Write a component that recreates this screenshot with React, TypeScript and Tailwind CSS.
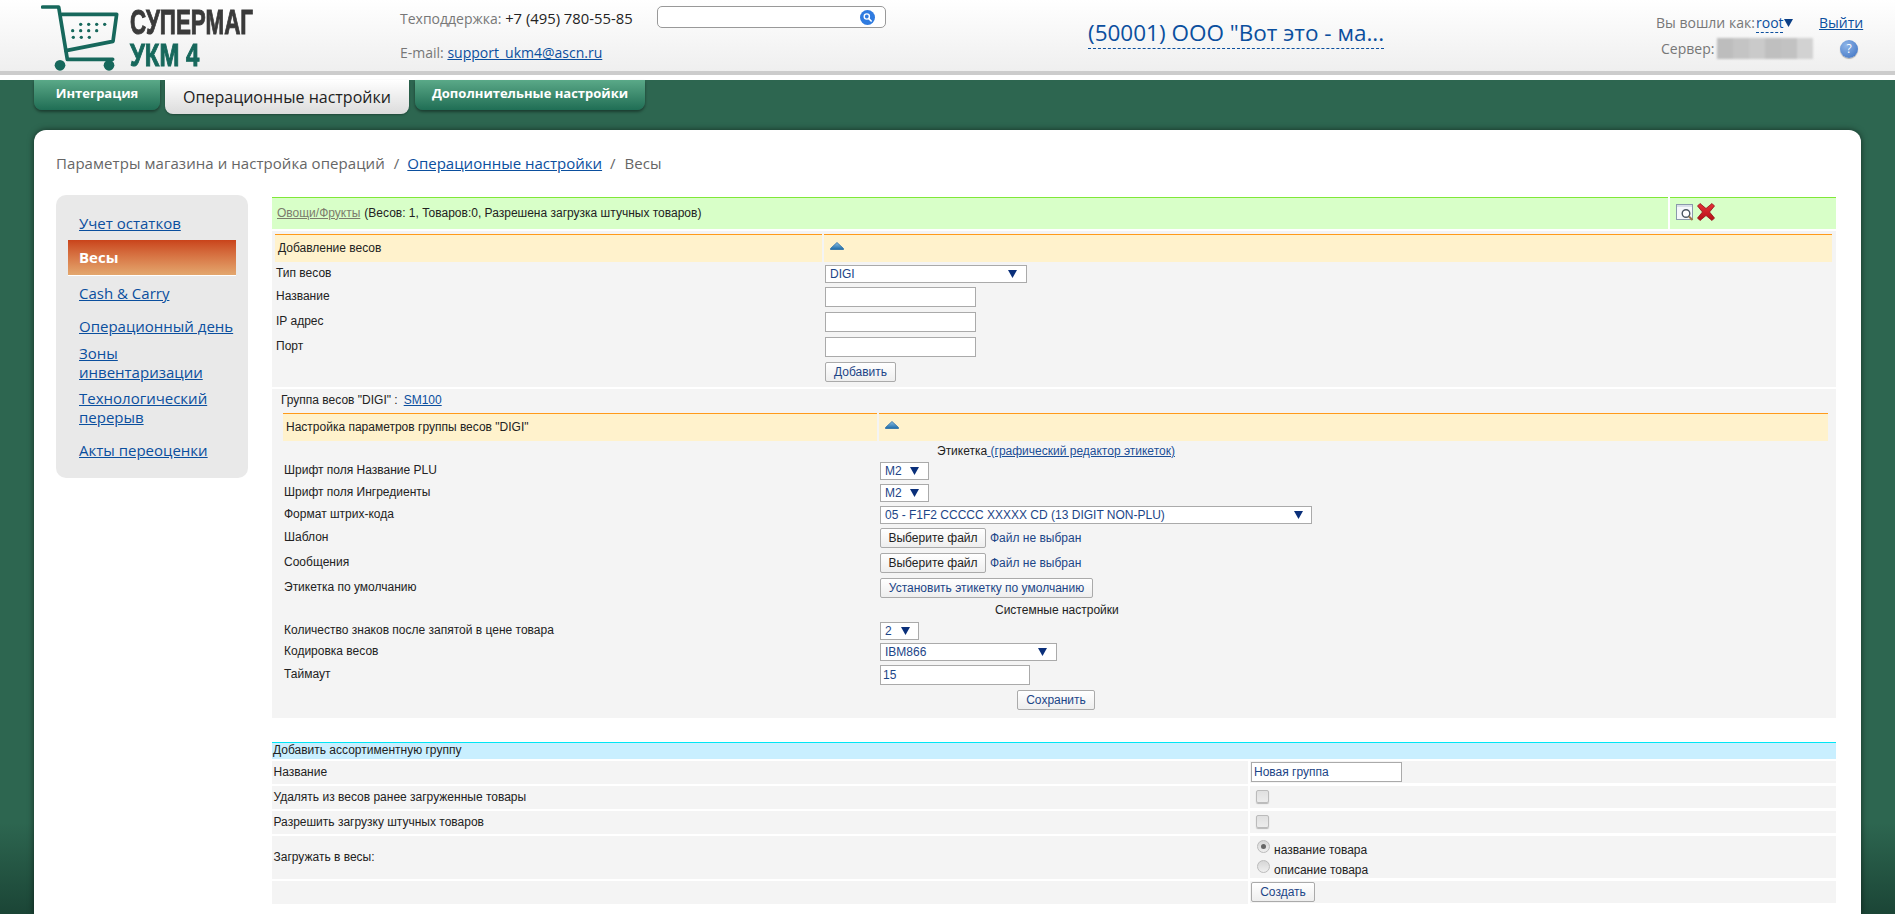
import React from "react";

const Tri = () => (
  <svg width="14" height="8" viewBox="0 0 14 8" className="block">
    <defs>
      <linearGradient id="tg" x1="0" y1="0" x2="0" y2="1">
        <stop offset="0" stopColor="#8cc0e4" />
        <stop offset="1" stopColor="#1b6aa8" />
      </linearGradient>
    </defs>
    <path d="M7 0.5 L13.5 6.5 V7.5 H0.5 V6.5 Z" fill="url(#tg)" stroke="#2a6da6" strokeWidth="0.8" />
  </svg>
);

const Arrow = () => (
  <svg width="9" height="8" viewBox="0 0 9 8" className="block shrink-0">
    <path d="M0 0 H9 L4.5 8 Z" fill="#0a2f7a" />
  </svg>
);

const Sel = ({ text, w, arrowRight }: { text: string; w: string; arrowRight: string }) => (
  <div className={`flex h-[18px] items-center justify-between border border-[#aaa] bg-white pl-[4px] text-[#1c4587] ${w} ${arrowRight}`}>
    <span className="pb-[1px]">{text}</span>
    <Arrow />
  </div>
);

const TextBox = ({ w, value = "" }: { w: string; value?: string }) => (
  <div className={`flex h-[20px] items-center border border-[#aaa] bg-white pb-[1px] pl-[2px] text-[#1c4587] ${w}`}>{value}</div>
);

const Btn = ({ children, w, dark }: { children: React.ReactNode; w: string; dark?: boolean }) => (
  <div
    className={`flex h-[20px] items-center justify-center rounded-[2px] border border-[#aaa] bg-gradient-to-b from-white to-[#eeeeee] pb-[1px] ${dark ? "text-[#222]" : "text-[#1c4587]"} ${w}`}
  >
    {children}
  </div>
);

const Row = ({ h, label, children, left }: { h: string; label?: string; children?: React.ReactNode; left: string }) => (
  <div className={`flex items-center ${h}`}>
    <div className={`shrink-0 pb-[2px] text-[#222] ${left}`}>{label}</div>
    {children}
  </div>
);

const FileRow = ({ h, label }: { h: string; label: string }) => (
  <Row h={h} label={label} left="w-[597px] pl-[1px]">
    <Btn w="w-[106px]" dark>
      Выберите файл
    </Btn>
    <span className="ml-[4px] pb-[1px] text-[#1c4587]">Файл не выбран</span>
  </Row>
);

const Check = () => (
  <span className="block h-[13px] w-[13px] rounded-[2px] border border-[#bbb] bg-gradient-to-b from-[#e0e0e0] to-[#ececec] shadow-[0_1px_1px_rgba(0,0,0,0.25)]" />
);

const Radio = ({ on }: { on?: boolean }) => (
  <span className="flex h-[13px] w-[13px] shrink-0 items-center justify-center rounded-full border border-[#bbb] bg-gradient-to-b from-[#d6d6d6] to-[#efefef]">
    {on && <span className="block h-[5px] w-[5px] rounded-full bg-[#666]" />}
  </span>
);

const GroupRow = ({ label, h, children }: { label: string; h: string; children?: React.ReactNode }) => (
  <div className={`flex gap-[2px] ${h}`}>
    <div className="flex w-[976px] items-center bg-[#f4f4f4] pb-[2px] pl-[1.5px] text-[#222]">{label}</div>
    <div className="mb-[1px] flex flex-1 items-center bg-[#f4f4f4] pl-[1px]">{children}</div>
  </div>
);

const Logo = () => (
  <div className="flex w-[400px] shrink-0 pl-[41px]">
    <svg width="80" height="72" viewBox="33 0 240 216" className="mt-[2px] shrink-0">
      <g fill="none" stroke="#17685c" strokeWidth="11" strokeLinecap="round" strokeLinejoin="round">
        <path d="M38 15 H86 L112 172 H248" />
        <path d="M96 37 H260 L249 118 L108 146" />
      </g>
      <circle cx="90" cy="190" r="16" fill="#17685c" />
      <circle cx="237" cy="190" r="16" fill="#17685c" />
      <g fill="#17685c">
        {[152, 176, 200, 224].map((x) => (
          <circle key={x} cx={x} cy="67" r="5" />
        ))}
        {[128, 152, 176, 200].map((x) => (
          <circle key={x} cx={x} cy="86" r="5" />
        ))}
        {[130, 154, 178].map((x) => (
          <circle key={x} cx={x} cy="106" r="5" />
        ))}
      </g>
    </svg>
    <div className="ml-[9px] flex flex-col font-['Liberation_Sans',Arial,sans-serif] font-bold">
      <span className="mt-[3px] block h-[38px] origin-left scale-x-[0.64] whitespace-nowrap text-[35px] leading-[38px] text-[#3a3a3a] [-webkit-text-stroke:1px_#3a3a3a]">
        СУПЕРМАГ
      </span>
      <span className="block h-[30px] origin-left scale-x-[0.77] whitespace-nowrap text-[31px] leading-[30px] text-[#17685c] [-webkit-text-stroke:1px_#17685c]">
        УКМ 4
      </span>
    </div>
  </div>
);

const SearchBox = () => (
  <div className="mt-[6px] flex h-[22px] w-[229px] shrink-0 items-center justify-end rounded-[5px] border border-[#999] bg-white pr-[10px]">
    <svg width="15" height="15" viewBox="0 0 15 15">
      <circle cx="7.5" cy="7.5" r="7.5" fill="#2f7be0" />
      <circle cx="6.8" cy="6.5" r="2.6" fill="none" stroke="#fff" strokeWidth="1.4" />
      <path d="M8.8 8.6 L11.2 11" stroke="#fff" strokeWidth="1.6" strokeLinecap="round" />
    </svg>
  </div>
);

const Header = () => (
  <header className="flex h-[71px] bg-gradient-to-b from-white to-[#efefef] font-['Open_Sans',sans-serif] text-[14px] leading-[20px] text-[#777]">
    <Logo />
    <div className="flex w-[257px] shrink-0 flex-col gap-[14px] pt-[8px]">
      <div>
        Техподдержка: <span className="text-[14.8px] text-[#222]">+7 (495) 780-55-85</span>
      </div>
      <div>
        E-mail: <a className="text-[#0b4f9e] underline">support_ukm4@ascn.ru</a>
      </div>
    </div>
    <SearchBox />
    <div className="ml-[202px] w-[568px] shrink-0 pt-[18px]">
      <span className="inline-block h-[31px] border-b border-dashed border-[#0b4f9e] text-[22.5px] leading-[30px] whitespace-nowrap text-[#0b4f9e]">
        (50001) ООО "Вот это - ма...
      </span>
    </div>
    <div className="flex-1 pt-[13px]">
      <div className="flex h-[20px] items-center">
        <span className="w-[100px] shrink-0">Вы вошли как:</span>
        <span className="h-[20px] w-[27px] border-b border-dashed border-[#0b4f9e] text-[#0b4f9e]">root</span>
        <span className="w-[36px] pl-[1px]">
          <svg width="9" height="8" viewBox="0 0 9 8" className="block">
            <path d="M0 0 H9 L4.5 8 Z" fill="#0b3f86" />
          </svg>
        </span>
        <a className="text-[#0b4f9e] underline">Выйти</a>
      </div>
      <div className="mt-[5px] flex items-center">
        <span className="ml-[5px] w-[56px] shrink-0">Сервер:</span>
        <div className="flex h-[21px] w-[96px] shrink-0 blur-[1px]">
          <span className="h-full w-[16px] bg-[#bdbdbd]" />
          <span className="h-full w-[16px] bg-[#c4c4c4]" />
          <span className="h-full w-[16px] bg-[#cacaca]" />
          <span className="h-full w-[16px] bg-[#bfbfbf]" />
          <span className="h-full w-[16px] bg-[#c2c2c2]" />
          <span className="h-full w-[16px] bg-[#d2d2d2]" />
        </div>
        <div className="ml-[27px] flex h-[18px] w-[18px] items-center justify-center rounded-full bg-[radial-gradient(circle_at_35%_30%,#8db4e8,#3a6fc0)] text-[12px] leading-none text-white shadow-[0_1px_1px_rgba(0,0,0,0.3)]">
          ?
        </div>
      </div>
    </div>
  </header>
);

const Tabs = () => (
  <nav className="flex h-[50px] items-start gap-[5px] pl-[34px] font-['Open_Sans',sans-serif] text-white">
    <div className="flex h-[30px] w-[126px] items-center justify-center rounded-b-[8px] bg-gradient-to-b from-[#5aa988] to-[#1f6e55] pb-[2px] text-[13px] font-bold shadow-[0_2px_3px_rgba(0,0,0,0.4)]">
      Интеграция
    </div>
    <div className="flex h-[34px] w-[244px] items-center justify-center rounded-b-[8px] bg-gradient-to-b from-white to-[#dcdcdc] text-[16px] text-[#222] shadow-[0_1px_2px_rgba(0,0,0,0.3)]">
      Операционные настройки
    </div>
    <div className="ml-[1px] flex h-[30px] w-[230px] items-center justify-center rounded-b-[8px] bg-gradient-to-b from-[#5aa988] to-[#1f6e55] pb-[2px] text-[13px] font-bold shadow-[0_2px_3px_rgba(0,0,0,0.4)]">
      Дополнительные настройки
    </div>
  </nav>
);

const Sidebar = () => {
  const link = "text-[#0b4f9e] underline";
  return (
    <aside className="h-[283px] w-[192px] shrink-0 rounded-[10px] bg-[#e9e9e9] px-[12px] pt-[14px] font-['Open_Sans',sans-serif] text-[15px] leading-[19px]">
      <div className="flex h-[31px] items-center pb-[2px] pl-[11px]"><a className={link}>Учет остатков</a></div>
      <div className="flex h-[36px] items-center border-b border-white bg-gradient-to-b from-[#c9431a] to-[#e3a76e] pb-[1px] pl-[11px] font-bold text-white">
        Весы
      </div>
      <div className="flex h-[36px] items-center pb-[2px] pl-[11px]"><a className={link}>Cash &amp; Carry</a></div>
      <div className="flex h-[30px] items-center pb-[2px] pl-[11px]"><a className={link}>Операционный день</a></div>
      <div className="flex h-[44px] items-center pb-[2px] pl-[11px]"><a className={link}>Зоны инвентаризации</a></div>
      <div className="flex h-[45px] items-center pb-[2px] pl-[11px]"><a className={link}>Технологический перерыв</a></div>
      <div className="flex h-[40px] items-center pb-[2px] pl-[11px]"><a className={link}>Акты переоценки</a></div>
    </aside>
  );
};

const GreenRow = () => (
  <div className="flex h-[32px] gap-[2px]">
    <div className="flex flex-1 items-center border-t border-[#80e838] bg-[#d8ffc8] pb-[2px] pl-[5px] text-[#222]">
      <a className="text-[#7c7c6c] underline">Овощи/Фрукты</a>
      <span className="ml-[4px]">(Весов: 1, Товаров:0, Разрешена загрузка штучных товаров)</span>
    </div>
    <div className="flex w-[166px] items-start gap-[3px] border-t border-[#80e838] bg-[#d8ffc8] pt-[6px] pl-[6px]">
      <svg width="18" height="17" viewBox="0 0 18 17" className="shrink-0">
        <rect x="0.5" y="0.5" width="16" height="15" fill="#f6f8fb" stroke="#8a99ab" />
        <rect x="1" y="1" width="15" height="2" fill="#d9dfe8" />
        <circle cx="10" cy="9.5" r="3.8" fill="#fff" stroke="#4a5560" strokeWidth="1.4" />
        <path d="M13 12.5 L16.5 16" stroke="#a07a48" strokeWidth="2" />
      </svg>
      <svg width="18" height="18" viewBox="0 0 18 18" className="-mt-[1px] shrink-0">
        <defs>
          <linearGradient id="xg" x1="0" y1="0" x2="0" y2="1">
            <stop offset="0" stopColor="#e8323a" />
            <stop offset="1" stopColor="#b40f16" />
          </linearGradient>
        </defs>
        <path
          d="M3 0.5 L9 5.5 L15 0.5 L17.5 3 L12.5 9 L17.5 15 L15 17.5 L9 12.5 L3 17.5 L0.5 15 L5.5 9 L0.5 3 Z"
          fill="url(#xg)"
          stroke="#8e1218"
          strokeWidth="0.8"
          strokeLinejoin="round"
        />
      </svg>
    </div>
  </div>
);

const OrangeHead = ({ title, w }: { title: string; w: string }) => (
  <div className="flex h-[28px] gap-[2px]">
    <div className={`flex items-center border-t border-[#ff9a1a] bg-[#fff2cc] pb-[2px] pl-[3px] text-[#222] ${w}`}>{title}</div>
    <div className="flex flex-1 items-start border-t border-[#ff9a1a] bg-[#fff2cc] pt-[7px] pl-[6px]">
      <Tri />
    </div>
  </div>
);

const AddScale = () => (
  <section className="bg-[#f4f4f4] pt-[3px] pr-[4px] pb-[1px] pl-[3px]">
    <OrangeHead title="Добавление весов" w="w-[547px]" />
    <Row h="h-[24px]" label="Тип весов" left="w-[550px] pl-[1px]">
      <Sel text="DIGI" w="w-[202px]" arrowRight="pr-[9px]" />
    </Row>
    <Row h="h-[22px]" label="Название" left="w-[550px] pl-[1px]"><TextBox w="w-[151px]" /></Row>
    <Row h="h-[28px]" label="IP адрес" left="w-[550px] pl-[1px]"><TextBox w="w-[151px]" /></Row>
    <Row h="h-[22px]" label="Порт" left="w-[550px] pl-[1px]"><TextBox w="w-[151px]" /></Row>
    <Row h="h-[28px]" left="w-[550px]"><Btn w="w-[71px]">Добавить</Btn></Row>
  </section>
);

const ScaleGroup = () => (
  <section className="mt-[2px] bg-[#f4f4f4] pr-[8px] pb-[5px] pl-[11px]">
    <div className="flex h-[22px] items-center pb-[1px] text-[#222]">
      <span className="-ml-[2px]">Группа весов "DIGI" :</span>
      <a className="ml-[6px] text-[#0b4f9e] underline">SM100</a>
    </div>
    <div className="mt-[2px]">
      <OrangeHead title='Настройка параметров группы весов "DIGI"' w="w-[594px]" />
    </div>
    <div className="flex h-[20px] items-center pb-[1px] pl-[654px] text-[#222]">
      Этикетка<a className="text-[#1c4f97] underline">{"\u00a0"}(графический редактор этикеток)</a>
    </div>
    <Row h="h-[20px]" label="Шрифт поля Название PLU" left="w-[597px] pl-[1px]">
      <Sel text="M2" w="w-[49px]" arrowRight="pr-[9px]" />
    </Row>
    <Row h="h-[24px]" label="Шрифт поля Ингредиенты" left="w-[597px] pl-[1px]">
      <Sel text="M2" w="w-[49px]" arrowRight="pr-[9px]" />
    </Row>
    <Row h="h-[20px]" label="Формат штрих-кода" left="w-[597px] pl-[1px]">
      <Sel text="05 - F1F2 CCCCC XXXXX CD (13 DIGIT NON-PLU)" w="w-[432px]" arrowRight="pr-[8px]" />
    </Row>
    <FileRow h="h-[26px]" label="Шаблон" />
    <FileRow h="h-[24px]" label="Сообщения" />
    <Row h="h-[26px]" label="Этикетка по умолчанию" left="w-[597px] pl-[1px]">
      <Btn w="w-[213px]">Установить этикетку по умолчанию</Btn>
    </Row>
    <div className="flex h-[20px] items-center pb-[2px] pl-[712px] text-[#222]">Системные настройки</div>
    <Row h="h-[20px]" label="Количество знаков после запятой в цене товара" left="w-[597px] pl-[1px]">
      <Sel text="2" w="w-[39px]" arrowRight="pr-[8px]" />
    </Row>
    <Row h="h-[22px]" label="Кодировка весов" left="w-[597px] pl-[1px]">
      <Sel text="IBM866" w="w-[177px]" arrowRight="pr-[9px]" />
    </Row>
    <Row h="h-[24px]" label="Таймаут" left="w-[597px] pl-[1px]"><TextBox w="w-[150px]" value="15" /></Row>
    <div className="flex h-[26px] items-center pl-[734px]"><Btn w="w-[78px]">Сохранить</Btn></div>
  </section>
);

const AddGroup = () => (
  <section className="mt-[24px] flex flex-col gap-[2px]">
    <div className="h-[17px] border-t border-[#00e6f5] bg-[#c9efff] pl-[1px] leading-[15px] text-[#222]">
      Добавить ассортиментную группу
    </div>
    <GroupRow label="Название" h="h-[23px]">
      <div className="flex h-[20px] w-[151px] items-center border border-[#aaa] bg-white pb-[1px] pl-[2px] text-[#1c4587]">Новая группа</div>
    </GroupRow>
    <GroupRow label="Удалять из весов ранее загруженные товары" h="h-[23px]">
      <span className="mb-[1px] ml-[5px]"><Check /></span>
    </GroupRow>
    <GroupRow label="Разрешить загрузку штучных товаров" h="h-[23px]">
      <span className="mb-[1px] ml-[5px]"><Check /></span>
    </GroupRow>
    <GroupRow label="Загружать в весы:" h="h-[43px]">
      <div className="ml-[6px] flex flex-col self-start pt-[4px] text-[#222]">
        <div className="flex h-[20px] items-start gap-[4px]"><Radio on /><span className="mt-[3px]">название товара</span></div>
        <div className="flex h-[19px] items-start gap-[4px]"><Radio /><span className="mt-[3px]">описание товара</span></div>
      </div>
    </GroupRow>
    <GroupRow label="" h="h-[23px]">
      <Btn w="w-[64px]">Создать</Btn>
    </GroupRow>
  </section>
);

const Card = () => (
  <main className="ml-[34px] h-[784px] w-[1827px] overflow-hidden rounded-t-[12px] bg-white shadow-[0_0_6px_rgba(0,0,0,0.55)]">
    <div className="flex h-[65px] items-center gap-[9px] pt-[2px] pl-[22px] font-['Open_Sans',sans-serif] text-[15px] text-[#666]">
      <span className="tracking-[0.06px]">Параметры магазина и настройка операций</span>
      <span>/</span>
      <a className="-ml-[1px] text-[#0b4f9e] underline">Операционные настройки</a>
      <span className="-ml-[1px]">/</span>
      <span>Весы</span>
    </div>
    <div className="flex pl-[22px]">
      <Sidebar />
      <div className="ml-[24px] w-[1564px] pt-[2px] font-['Liberation_Sans',Arial,sans-serif] text-[12px] leading-[14px]">
        <GreenRow />
        <div className="h-[2px]" />
        <AddScale />
        <ScaleGroup />
        <AddGroup />
      </div>
    </div>
  </main>
);

export default function App() {
  return (
    <div className="h-[914px] overflow-hidden bg-[linear-gradient(to_bottom,#2d6650_0%,#2d6650_90%,#1b4536_100%)]">
      <Header />
      <div className="h-[4px] bg-[#cccccc]" />
      <div className="h-[5px] bg-white" />
      <Tabs />
      <Card />
    </div>
  );
}
